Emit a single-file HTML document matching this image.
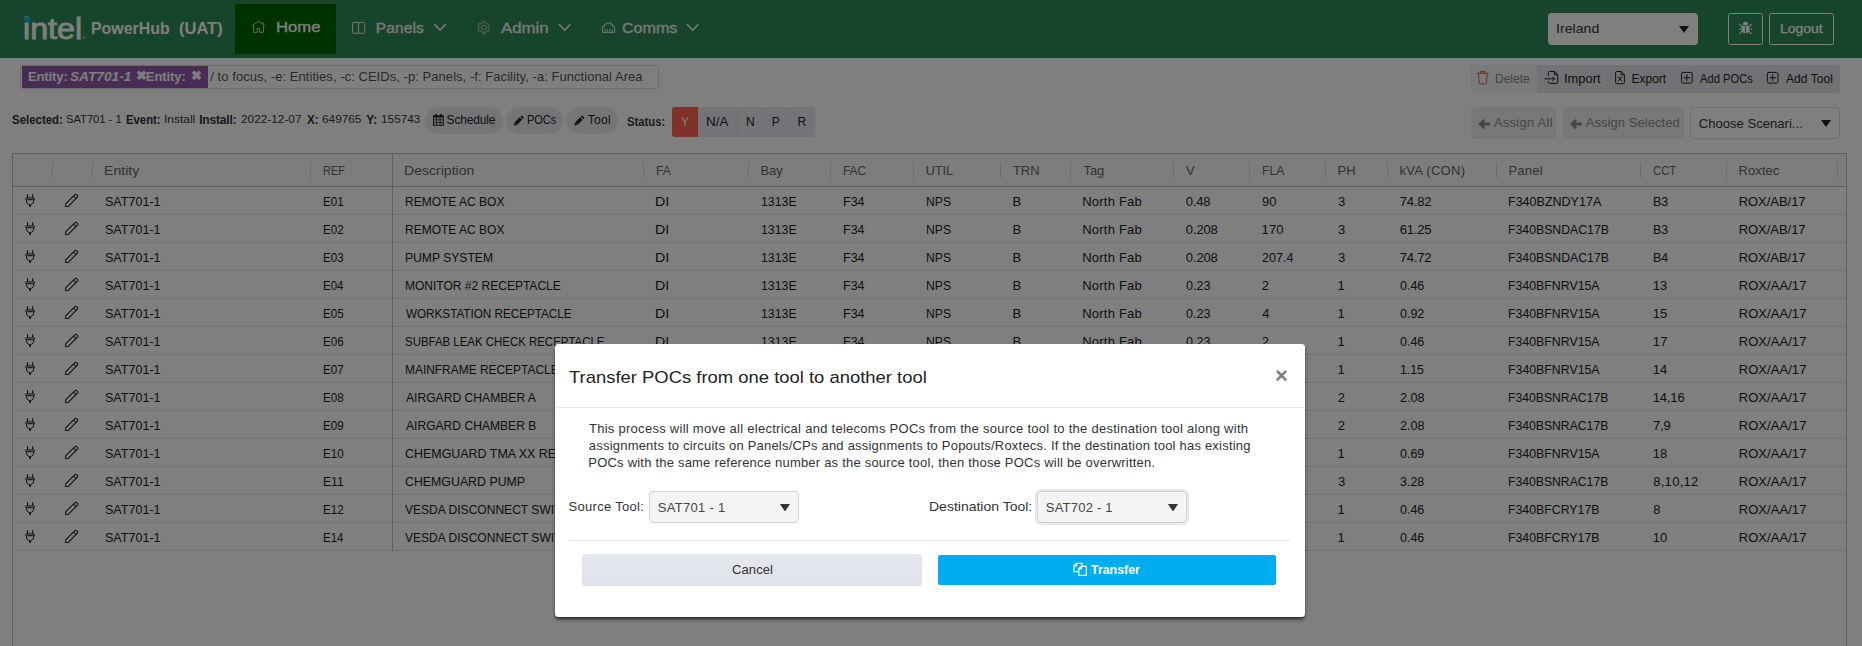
<!DOCTYPE html>
<html><head><meta charset="utf-8"><title>PowerHub (UAT)</title>
<style>
*{box-sizing:border-box;margin:0;padding:0}
html,body{width:1862px;height:646px;overflow:hidden;background:#fff;font-family:"Liberation Sans",sans-serif;color:#222}
.a,.t,svg{position:absolute}
.t{white-space:pre;line-height:1;transform-origin:0 0}
#page,#ov,#top{position:absolute;left:0;top:0;width:1862px;height:646px}
#ov{background:rgba(0,0,0,.5)}
</style></head><body>
<div id="page">
<div class="a" style="left:0px;top:0px;width:1862px;height:58px;background:#2e8b57"></div>
<div class="a" style="left:235px;top:4px;width:101px;height:50px;background:#006400"></div>
<div class="a" style="left:1548px;top:13px;width:150px;height:32px;background:#fff;border-radius:4px"></div>
<svg style="left:1679px;top:26px" width="10" height="7" viewBox="0 0 10 7"><path d="M0 0H10L5.0 7Z" fill="#222"/></svg>
<div class="a" style="left:1728px;top:13px;width:35px;height:32px;border:1px solid #fff;border-radius:2.5px"></div>
<div class="a" style="left:1769px;top:13px;width:65px;height:32px;border:1px solid #fff;border-radius:2.5px"></div>
<div class="a" style="left:20px;top:65px;width:639px;height:24px;background:#fff;border:1px solid #d8d8d8;border-radius:3px"></div>
<div class="a" style="left:22px;top:66px;width:186px;height:22px;background:#8f5aa8"></div>
<div class="a" style="left:1470px;top:65px;width:370px;height:28.3px;background:#e2e5ea;border-radius:3px"></div>
<div class="a" style="left:1470px;top:65px;width:67px;height:28px;background:#f3f4f6;border-radius:3px 0 0 3px"></div>
<div class="a" style="left:1607px;top:65px;width:1px;height:28px;background:#dfe2e7"></div>
<div class="a" style="left:1673px;top:65px;width:1px;height:28px;background:#dfe2e7"></div>
<div class="a" style="left:1760px;top:65px;width:1px;height:28px;background:#dfe2e7"></div>
<div class="a" style="left:425px;top:107px;width:78px;height:26.5px;background:#e8eaef;border-radius:13.5px"></div>
<div class="a" style="left:506px;top:107px;width:57px;height:26.5px;background:#e8eaef;border-radius:13.5px"></div>
<div class="a" style="left:567px;top:107px;width:51px;height:26.5px;background:#e8eaef;border-radius:13.5px"></div>
<div class="a" style="left:672px;top:107px;width:143px;height:29.5px;background:#e6e9ee;border-radius:3px"></div>
<div class="a" style="left:672px;top:107px;width:26px;height:29.5px;background:#ff6355;border-radius:3px 0 0 3px"></div>
<div class="a" style="left:737px;top:107px;width:1px;height:29.5px;background:#dfe2e7"></div>
<div class="a" style="left:765px;top:107px;width:1px;height:29.5px;background:#dfe2e7"></div>
<div class="a" style="left:789px;top:107px;width:1px;height:29.5px;background:#dfe2e7"></div>
<div class="a" style="left:1471px;top:107px;width:84.7px;height:31.8px;background:#eef0f3;border-radius:4px"></div>
<div class="a" style="left:1563px;top:107px;width:121px;height:31.8px;background:#eef0f3;border-radius:4px"></div>
<div class="a" style="left:1690px;top:107px;width:150px;height:31.5px;background:#fff;border:1px solid #ddd;border-radius:4px"></div>
<svg style="left:1821px;top:120px" width="10" height="7" viewBox="0 0 10 7"><path d="M0 0H10L5.0 7Z" fill="#222"/></svg>
<div class="a" style="left:12px;top:153px;width:1835px;height:520px;background:#fff;border:1px solid #babfc7"></div>
<div class="a" style="left:13px;top:154px;width:1833px;height:32px;background:#f6fdf9"></div>
<div class="a" style="left:13px;top:186px;width:1833px;height:1px;background:#babfc7"></div>
<div class="a" style="left:13px;top:214px;width:1833px;height:1px;background:#e1e4e9"></div>
<div class="a" style="left:13px;top:242px;width:1833px;height:1px;background:#e1e4e9"></div>
<div class="a" style="left:13px;top:270px;width:1833px;height:1px;background:#e1e4e9"></div>
<div class="a" style="left:13px;top:298px;width:1833px;height:1px;background:#e1e4e9"></div>
<div class="a" style="left:13px;top:326px;width:1833px;height:1px;background:#e1e4e9"></div>
<div class="a" style="left:13px;top:354px;width:1833px;height:1px;background:#e1e4e9"></div>
<div class="a" style="left:13px;top:382px;width:1833px;height:1px;background:#e1e4e9"></div>
<div class="a" style="left:13px;top:410px;width:1833px;height:1px;background:#e1e4e9"></div>
<div class="a" style="left:13px;top:438px;width:1833px;height:1px;background:#e1e4e9"></div>
<div class="a" style="left:13px;top:466px;width:1833px;height:1px;background:#e1e4e9"></div>
<div class="a" style="left:13px;top:494px;width:1833px;height:1px;background:#e1e4e9"></div>
<div class="a" style="left:13px;top:522px;width:1833px;height:1px;background:#e1e4e9"></div>
<div class="a" style="left:13px;top:550px;width:1833px;height:1px;background:#e1e4e9"></div>
<div class="a" style="left:392px;top:154px;width:1px;height:397px;background:#babfc7"></div>
<div class="a" style="left:52px;top:162px;width:1px;height:16px;background:#d4d8de"></div>
<div class="a" style="left:92px;top:162px;width:1px;height:16px;background:#d4d8de"></div>
<div class="a" style="left:310px;top:162px;width:1px;height:16px;background:#d4d8de"></div>
<div class="a" style="left:643px;top:162px;width:1px;height:16px;background:#d4d8de"></div>
<div class="a" style="left:748px;top:162px;width:1px;height:16px;background:#d4d8de"></div>
<div class="a" style="left:830px;top:162px;width:1px;height:16px;background:#d4d8de"></div>
<div class="a" style="left:913px;top:162px;width:1px;height:16px;background:#d4d8de"></div>
<div class="a" style="left:1000px;top:162px;width:1px;height:16px;background:#d4d8de"></div>
<div class="a" style="left:1070px;top:162px;width:1px;height:16px;background:#d4d8de"></div>
<div class="a" style="left:1173px;top:162px;width:1px;height:16px;background:#d4d8de"></div>
<div class="a" style="left:1249px;top:162px;width:1px;height:16px;background:#d4d8de"></div>
<div class="a" style="left:1325px;top:162px;width:1px;height:16px;background:#d4d8de"></div>
<div class="a" style="left:1387px;top:162px;width:1px;height:16px;background:#d4d8de"></div>
<div class="a" style="left:1496px;top:162px;width:1px;height:16px;background:#d4d8de"></div>
<div class="a" style="left:1640px;top:162px;width:1px;height:16px;background:#d4d8de"></div>
<div class="a" style="left:1726px;top:162px;width:1px;height:16px;background:#d4d8de"></div>
<div class="a" style="left:1837px;top:162px;width:1px;height:16px;background:#d4d8de"></div>
<svg style="left:22px;top:190px" width="60" height="20" viewBox="22 190 60 20" fill="none" stroke="#1a1a1a" stroke-width="1" stroke-linejoin="round"><path d="M27.500 194.200V197.700M32.700 194.200V197.700" stroke-width="1.100"/><rect x="25.600" y="197.900" width="9" height="1.800" rx=".9"/><path d="M26.500 199.900V201.500Q26.500 203.200 28.400 204.100L30.100 204.900L31.800 204.100Q33.700 203.200 33.700 201.500V199.900"/><path d="M30.100 205V206.900" stroke-width="1.600"/><g transform="translate(65.600 206.500) rotate(-45)"><path d="M0 0L1.900 -1.800H15a1.100 1.100 0 0 1 1.100 1.100V0.700a1.100 1.100 0 0 1 -1.100 1.100H1.900Z"/><path d="M12.900 -1.800V1.800"/></g></svg>
<svg style="left:22px;top:218px" width="60" height="20" viewBox="22 190 60 20" fill="none" stroke="#1a1a1a" stroke-width="1" stroke-linejoin="round"><path d="M27.500 194.200V197.700M32.700 194.200V197.700" stroke-width="1.100"/><rect x="25.600" y="197.900" width="9" height="1.800" rx=".9"/><path d="M26.500 199.900V201.500Q26.500 203.200 28.400 204.100L30.100 204.900L31.800 204.100Q33.700 203.200 33.700 201.500V199.900"/><path d="M30.100 205V206.900" stroke-width="1.600"/><g transform="translate(65.600 206.500) rotate(-45)"><path d="M0 0L1.900 -1.800H15a1.100 1.100 0 0 1 1.100 1.100V0.700a1.100 1.100 0 0 1 -1.100 1.100H1.900Z"/><path d="M12.900 -1.800V1.800"/></g></svg>
<svg style="left:22px;top:246px" width="60" height="20" viewBox="22 190 60 20" fill="none" stroke="#1a1a1a" stroke-width="1" stroke-linejoin="round"><path d="M27.500 194.200V197.700M32.700 194.200V197.700" stroke-width="1.100"/><rect x="25.600" y="197.900" width="9" height="1.800" rx=".9"/><path d="M26.500 199.900V201.500Q26.500 203.200 28.400 204.100L30.100 204.900L31.800 204.100Q33.700 203.200 33.700 201.500V199.900"/><path d="M30.100 205V206.900" stroke-width="1.600"/><g transform="translate(65.600 206.500) rotate(-45)"><path d="M0 0L1.900 -1.800H15a1.100 1.100 0 0 1 1.100 1.100V0.700a1.100 1.100 0 0 1 -1.100 1.100H1.900Z"/><path d="M12.900 -1.800V1.800"/></g></svg>
<svg style="left:22px;top:274px" width="60" height="20" viewBox="22 190 60 20" fill="none" stroke="#1a1a1a" stroke-width="1" stroke-linejoin="round"><path d="M27.500 194.200V197.700M32.700 194.200V197.700" stroke-width="1.100"/><rect x="25.600" y="197.900" width="9" height="1.800" rx=".9"/><path d="M26.500 199.900V201.500Q26.500 203.200 28.400 204.100L30.100 204.900L31.800 204.100Q33.700 203.200 33.700 201.500V199.900"/><path d="M30.100 205V206.900" stroke-width="1.600"/><g transform="translate(65.600 206.500) rotate(-45)"><path d="M0 0L1.900 -1.800H15a1.100 1.100 0 0 1 1.100 1.100V0.700a1.100 1.100 0 0 1 -1.100 1.100H1.900Z"/><path d="M12.900 -1.800V1.800"/></g></svg>
<svg style="left:22px;top:302px" width="60" height="20" viewBox="22 190 60 20" fill="none" stroke="#1a1a1a" stroke-width="1" stroke-linejoin="round"><path d="M27.500 194.200V197.700M32.700 194.200V197.700" stroke-width="1.100"/><rect x="25.600" y="197.900" width="9" height="1.800" rx=".9"/><path d="M26.500 199.900V201.500Q26.500 203.200 28.400 204.100L30.100 204.900L31.800 204.100Q33.700 203.200 33.700 201.500V199.900"/><path d="M30.100 205V206.900" stroke-width="1.600"/><g transform="translate(65.600 206.500) rotate(-45)"><path d="M0 0L1.900 -1.800H15a1.100 1.100 0 0 1 1.100 1.100V0.700a1.100 1.100 0 0 1 -1.100 1.100H1.900Z"/><path d="M12.900 -1.800V1.800"/></g></svg>
<svg style="left:22px;top:330px" width="60" height="20" viewBox="22 190 60 20" fill="none" stroke="#1a1a1a" stroke-width="1" stroke-linejoin="round"><path d="M27.500 194.200V197.700M32.700 194.200V197.700" stroke-width="1.100"/><rect x="25.600" y="197.900" width="9" height="1.800" rx=".9"/><path d="M26.500 199.900V201.500Q26.500 203.200 28.400 204.100L30.100 204.900L31.800 204.100Q33.700 203.200 33.700 201.500V199.900"/><path d="M30.100 205V206.900" stroke-width="1.600"/><g transform="translate(65.600 206.500) rotate(-45)"><path d="M0 0L1.900 -1.800H15a1.100 1.100 0 0 1 1.100 1.100V0.700a1.100 1.100 0 0 1 -1.100 1.100H1.900Z"/><path d="M12.900 -1.800V1.800"/></g></svg>
<svg style="left:22px;top:358px" width="60" height="20" viewBox="22 190 60 20" fill="none" stroke="#1a1a1a" stroke-width="1" stroke-linejoin="round"><path d="M27.500 194.200V197.700M32.700 194.200V197.700" stroke-width="1.100"/><rect x="25.600" y="197.900" width="9" height="1.800" rx=".9"/><path d="M26.500 199.900V201.500Q26.500 203.200 28.400 204.100L30.100 204.900L31.800 204.100Q33.700 203.200 33.700 201.500V199.900"/><path d="M30.100 205V206.900" stroke-width="1.600"/><g transform="translate(65.600 206.500) rotate(-45)"><path d="M0 0L1.900 -1.800H15a1.100 1.100 0 0 1 1.100 1.100V0.700a1.100 1.100 0 0 1 -1.100 1.100H1.900Z"/><path d="M12.900 -1.800V1.800"/></g></svg>
<svg style="left:22px;top:386px" width="60" height="20" viewBox="22 190 60 20" fill="none" stroke="#1a1a1a" stroke-width="1" stroke-linejoin="round"><path d="M27.500 194.200V197.700M32.700 194.200V197.700" stroke-width="1.100"/><rect x="25.600" y="197.900" width="9" height="1.800" rx=".9"/><path d="M26.500 199.900V201.500Q26.500 203.200 28.400 204.100L30.100 204.900L31.800 204.100Q33.700 203.200 33.700 201.500V199.900"/><path d="M30.100 205V206.900" stroke-width="1.600"/><g transform="translate(65.600 206.500) rotate(-45)"><path d="M0 0L1.900 -1.800H15a1.100 1.100 0 0 1 1.100 1.100V0.700a1.100 1.100 0 0 1 -1.100 1.100H1.900Z"/><path d="M12.900 -1.800V1.800"/></g></svg>
<svg style="left:22px;top:414px" width="60" height="20" viewBox="22 190 60 20" fill="none" stroke="#1a1a1a" stroke-width="1" stroke-linejoin="round"><path d="M27.500 194.200V197.700M32.700 194.200V197.700" stroke-width="1.100"/><rect x="25.600" y="197.900" width="9" height="1.800" rx=".9"/><path d="M26.500 199.900V201.500Q26.500 203.200 28.400 204.100L30.100 204.900L31.800 204.100Q33.700 203.200 33.700 201.500V199.900"/><path d="M30.100 205V206.900" stroke-width="1.600"/><g transform="translate(65.600 206.500) rotate(-45)"><path d="M0 0L1.900 -1.800H15a1.100 1.100 0 0 1 1.100 1.100V0.700a1.100 1.100 0 0 1 -1.100 1.100H1.900Z"/><path d="M12.900 -1.800V1.800"/></g></svg>
<svg style="left:22px;top:442px" width="60" height="20" viewBox="22 190 60 20" fill="none" stroke="#1a1a1a" stroke-width="1" stroke-linejoin="round"><path d="M27.500 194.200V197.700M32.700 194.200V197.700" stroke-width="1.100"/><rect x="25.600" y="197.900" width="9" height="1.800" rx=".9"/><path d="M26.500 199.900V201.500Q26.500 203.200 28.400 204.100L30.100 204.900L31.800 204.100Q33.700 203.200 33.700 201.500V199.900"/><path d="M30.100 205V206.900" stroke-width="1.600"/><g transform="translate(65.600 206.500) rotate(-45)"><path d="M0 0L1.900 -1.800H15a1.100 1.100 0 0 1 1.100 1.100V0.700a1.100 1.100 0 0 1 -1.100 1.100H1.900Z"/><path d="M12.900 -1.800V1.800"/></g></svg>
<svg style="left:22px;top:470px" width="60" height="20" viewBox="22 190 60 20" fill="none" stroke="#1a1a1a" stroke-width="1" stroke-linejoin="round"><path d="M27.500 194.200V197.700M32.700 194.200V197.700" stroke-width="1.100"/><rect x="25.600" y="197.900" width="9" height="1.800" rx=".9"/><path d="M26.500 199.900V201.500Q26.500 203.200 28.400 204.100L30.100 204.900L31.800 204.100Q33.700 203.200 33.700 201.500V199.900"/><path d="M30.100 205V206.900" stroke-width="1.600"/><g transform="translate(65.600 206.500) rotate(-45)"><path d="M0 0L1.900 -1.800H15a1.100 1.100 0 0 1 1.100 1.100V0.700a1.100 1.100 0 0 1 -1.100 1.100H1.900Z"/><path d="M12.900 -1.800V1.800"/></g></svg>
<svg style="left:22px;top:498px" width="60" height="20" viewBox="22 190 60 20" fill="none" stroke="#1a1a1a" stroke-width="1" stroke-linejoin="round"><path d="M27.500 194.200V197.700M32.700 194.200V197.700" stroke-width="1.100"/><rect x="25.600" y="197.900" width="9" height="1.800" rx=".9"/><path d="M26.500 199.900V201.500Q26.500 203.200 28.400 204.100L30.100 204.900L31.800 204.100Q33.700 203.200 33.700 201.500V199.900"/><path d="M30.100 205V206.900" stroke-width="1.600"/><g transform="translate(65.600 206.500) rotate(-45)"><path d="M0 0L1.900 -1.800H15a1.100 1.100 0 0 1 1.100 1.100V0.700a1.100 1.100 0 0 1 -1.100 1.100H1.900Z"/><path d="M12.900 -1.800V1.800"/></g></svg>
<svg style="left:22px;top:526px" width="60" height="20" viewBox="22 190 60 20" fill="none" stroke="#1a1a1a" stroke-width="1" stroke-linejoin="round"><path d="M27.500 194.200V197.700M32.700 194.200V197.700" stroke-width="1.100"/><rect x="25.600" y="197.900" width="9" height="1.800" rx=".9"/><path d="M26.500 199.900V201.500Q26.500 203.200 28.400 204.100L30.100 204.900L31.800 204.100Q33.700 203.200 33.700 201.500V199.900"/><path d="M30.100 205V206.900" stroke-width="1.600"/><g transform="translate(65.600 206.500) rotate(-45)"><path d="M0 0L1.900 -1.800H15a1.100 1.100 0 0 1 1.100 1.100V0.700a1.100 1.100 0 0 1 -1.100 1.100H1.900Z"/><path d="M12.900 -1.800V1.800"/></g></svg>
<svg style="left:0;top:0" width="1862" height="646" viewBox="0 0 1862 646" fill="none"><g stroke="#c8d0c8" stroke-width="1" stroke-linecap="round" stroke-linejoin="round"><path d="M252.3 25.9L258.5 21.2L264.7 25.9"/><path d="M253.6 26.2V32.3H257.3V28.4H259.7V32.3H263.4V26.2"/><path d="M263.1 22.4V24.3"/></g><g stroke="#e8e8e8" stroke-width="1"><rect x="352.5" y="22.4" width="12.2" height="10.9" rx="1.5"/><path d="M358.6 22.4V33.3"/></g><g stroke="#c4ccc6" stroke-width="1" stroke-linejoin="round"><path d="M482.21 23.01L482.55 21.39L484.65 21.39L484.99 23.01L486.79 24.05L488.37 23.54L489.42 25.35L488.18 26.46L488.18 28.54L489.42 29.65L488.37 31.46L486.79 30.95L484.99 31.99L484.65 33.61L482.55 33.61L482.21 31.99L480.41 30.95L478.83 31.46L477.78 29.65L479.02 28.54L479.02 26.46L477.78 25.35L478.83 23.54L480.41 24.05Z"/><circle cx="483.6" cy="27.5" r="2.3"/></g><g stroke="#e8e8e8" stroke-width="1" stroke-linejoin="round"><path d="M602.5 32.4V26.6H604.3V24.8H605.8V23.2H611.3V24.8H612.8V26.6H614.6V32.4Z"/><path d="M604.9 28.8V32.4M607.3 28.8V32.4M609.8 28.8V32.4M612.2 28.8V32.4" stroke-width=".9"/></g><path d="M434.8 24.6L440.1 30.1L445.40000000000003 24.6" stroke="#e8e8e8" stroke-width="1.7" stroke-linecap="round" stroke-linejoin="round"/><path d="M559.4000000000001 24.6L564.7 30.1L570.0 24.6" stroke="#e8e8e8" stroke-width="1.7" stroke-linecap="round" stroke-linejoin="round"/><path d="M687.4000000000001 24.6L692.7 30.1L698.0 24.6" stroke="#e8e8e8" stroke-width="1.7" stroke-linecap="round" stroke-linejoin="round"/><g fill="#fff" stroke="#fff"><path d="M1742.800 25.200a2.700 3.400 0 0 1 5.400 0z" stroke="none"/><path d="M1741.900 25.900H1749.100V30.100a3.600 3.200 0 0 1-7.200 0z" stroke="none"/><path d="M1742 26.8L1739.8 24.4M1749 26.8L1751.2 24.4M1742 29H1739.3M1749 29H1751.7M1742 31.2L1739.8 33.6M1749 31.2L1751.2 33.6" stroke-width="1.200" stroke-linecap="round"/><path d="M1745.500 27V32.800" stroke="#2e8b57" stroke-width=".9"/></g><g stroke="#e8504a" stroke-width="1" stroke-linejoin="round" stroke-linecap="round"><path d="M1477.3 73.2H1488.3"/><path d="M1480.8 73V71.5H1484.8V73"/><path d="M1478.3 73.4L1479.3 83.1Q1479.4 83.9 1480.2 83.9H1485.4Q1486.2 83.900 1486.300 83.100L1487.300 73.400"/></g><g stroke="#222" stroke-width="1" stroke-linejoin="round" stroke-linecap="round"><path d="M1548.4 75.5V72.5Q1548.400 71.500 1549.400 71.500H1554.500L1557.700 74.700V82.400Q1557.700 83.400 1556.700 83.400H1549.400Q1548.400 83.400 1548.400 82.400V81.500"/><path d="M1554.500 71.500V74.700H1557.700"/><path d="M1545 78.800H1554.500M1552.700 77L1554.500 78.800L1552.700 80.600"/></g><g stroke="#222" stroke-width="1" stroke-linejoin="round" stroke-linecap="round"><path d="M1615.600 72.500Q1615.600 71.500 1616.600 71.500H1621.200L1624.400 74.700V82.700Q1624.400 83.700 1623.400 83.700H1616.600Q1615.600 83.700 1615.600 82.700Z"/><path d="M1621.200 71.500V74.700H1624.400"/><path d="M1618.200 76.700L1621.800 81M1621.800 76.700L1618.200 81"/></g><g stroke="#222" stroke-width="1" stroke-linecap="round"><rect x="1681.5" y="72.400" width="10.700" height="10.700" rx="1.600"/><path d="M1683.9 77.750H1689.8M1686.85 74.800V80.700"/></g><g stroke="#222" stroke-width="1" stroke-linecap="round"><rect x="1767.3" y="72.400" width="10.700" height="10.700" rx="1.600"/><path d="M1769.7 77.750H1775.6M1772.6499999999999 74.800V80.700"/></g><g fill="#222"><path fill-rule="evenodd" d="M433 115.300H443.800V125.800H433ZM434 117.500V119.400H436.200V117.500ZM437.100 117.500V119.400H439.600V117.500ZM440.500 117.500V119.400H442.800V117.500ZM434 120.300V122.200H436.200V120.300ZM437.100 120.300V122.200H439.600V120.300ZM440.500 120.300V122.200H442.800V120.300ZM434 123.100V124.800H436.200V123.100ZM437.100 123.100V124.800H439.600V123.100ZM440.500 123.100V124.800H442.800V123.100Z"/><rect x="435.200" y="113.700" width="1.600" height="2.900" rx=".8"/><rect x="440" y="113.700" width="1.600" height="2.900" rx=".8"/></g><g transform="translate(513.5 114.6) scale(1.06)" fill="#222"><path d="M7.700 0.800L9.900 3L8.700 4.200L6.500 2ZM5.900 2.600L8.100 4.800L3.200 9.700L0.300 10.400L1 7.500Z"/><path d="M1.600 7.900L2.800 9.100" stroke="#e8eaef" stroke-width=".7"/></g><g transform="translate(574 114.6) scale(1.06)" fill="#222"><path d="M7.700 0.800L9.900 3L8.700 4.200L6.500 2ZM5.900 2.600L8.100 4.800L3.200 9.700L0.300 10.400L1 7.500Z"/><path d="M1.600 7.900L2.800 9.100" stroke="#e8eaef" stroke-width=".7"/></g><path transform="translate(1478.3 119.3)" fill="#8a8a8a" d="M0 4.800L5.200 -.3L7 1.500L5.200 3.300H11.800V6.300H5.200L7 8.100L5.200 9.900Z"/><path transform="translate(1570 119.3)" fill="#8a8a8a" d="M0 4.800L5.200 -.3L7 1.500L5.200 3.300H11.800V6.300H5.200L7 8.100L5.200 9.900Z"/></svg>
<div class="t" style="left:23.3px;top:13.8px;font-size:30px;color:#fff;transform:scaleX(1.075);-webkit-text-stroke:0.8px #fff">intel</div>
<div class="t" style="left:82.4px;top:35.9px;font-size:4px;color:#fff">®</div>
<div class="t" style="left:90.6px;top:20.2px;font-size:17px;color:#fff;font-weight:bold;transform:scaleX(0.937)">PowerHub</div>
<div class="t" style="left:179.1px;top:20.2px;font-size:17px;color:#fff;font-weight:bold;transform:scaleX(0.970)">(UAT)</div>
<div class="t" style="left:276.2px;top:18.6px;font-size:15.5px;color:#fff;transform:scaleX(1.076);-webkit-text-stroke:0.3px #fff">Home</div>
<div class="t" style="left:375.8px;top:19.6px;font-size:15.5px;color:#f2f2f2;letter-spacing:0.12px;-webkit-text-stroke:0.3px #f2f2f2">Panels</div>
<div class="t" style="left:501.3px;top:19.6px;font-size:15.5px;color:#f2f2f2;transform:scaleX(1.086);-webkit-text-stroke:0.3px #f2f2f2">Admin</div>
<div class="t" style="left:621.6px;top:19.6px;font-size:15.5px;color:#f2f2f2;transform:scaleX(1.037);-webkit-text-stroke:0.3px #f2f2f2">Comms</div>
<div class="t" style="left:1556.2px;top:22.3px;font-size:13px;color:#333;transform:scaleX(1.089)">Ireland</div>
<div class="t" style="left:1779.8px;top:22.3px;font-size:13px;color:#fff;transform:scaleX(1.075);-webkit-text-stroke:0.25px #fff">Logout</div>
<div class="t" style="left:27.9px;top:69.7px;font-size:13px;color:#fff;letter-spacing:-0.10px;font-weight:bold">Entity:</div>
<div class="t" style="left:70.0px;top:69.7px;font-size:13px;color:#fff;font-weight:bold;font-style:italic;transform:scaleX(1.052)">SAT701-1</div>
<div class="t" style="left:135.8px;top:69.2px;font-size:13px;color:#fff;font-weight:bold">✖</div>
<div class="t" style="left:145.8px;top:69.7px;font-size:13px;color:#fff;letter-spacing:-0.07px;font-weight:bold">Entity:</div>
<div class="t" style="left:190.7px;top:69.2px;font-size:13px;color:#fff;font-weight:bold">✖</div>
<div class="t" style="left:210.3px;top:70.3px;font-size:13px;color:#555;letter-spacing:0.05px">/ to focus, -e: Entities, -c: CEIDs, -p: Panels, -f: Facility, -a: Functional Area</div>
<div class="t" style="left:1495.1px;top:73.3px;font-size:12px;color:#858585;letter-spacing:-0.03px">Delete</div>
<div class="t" style="left:1564.2px;top:73.3px;font-size:12px;color:#222;transform:scaleX(1.073)">Import</div>
<div class="t" style="left:1631.5px;top:73.3px;font-size:12px;color:#222;letter-spacing:-0.01px">Export</div>
<div class="t" style="left:1700.2px;top:73.3px;font-size:12px;color:#222;transform:scaleX(0.932)">Add POCs</div>
<div class="t" style="left:1785.9px;top:73.3px;font-size:12px;color:#222;letter-spacing:0.09px">Add Tool</div>
<div class="t" style="left:11.6px;top:113.9px;font-size:12px;color:#333;font-weight:bold;transform:scaleX(0.953)">Selected:</div>
<div class="t" style="left:66.1px;top:114.7px;font-size:10px;color:#333;transform:scaleX(1.116)">SAT701 - 1</div>
<div class="t" style="left:126.3px;top:113.9px;font-size:12px;color:#333;font-weight:bold;transform:scaleX(0.944)">Event:</div>
<div class="t" style="left:164.2px;top:114.7px;font-size:10px;color:#333;transform:scaleX(1.196)">Install</div>
<div class="t" style="left:199.2px;top:113.9px;font-size:12px;color:#333;letter-spacing:-0.18px;font-weight:bold">Install:</div>
<div class="t" style="left:240.7px;top:114.7px;font-size:10px;color:#333;transform:scaleX(1.182)">2022-12-07</div>
<div class="t" style="left:306.5px;top:113.9px;font-size:12px;color:#333;font-weight:bold;transform:scaleX(0.962)">X:</div>
<div class="t" style="left:321.6px;top:114.7px;font-size:10px;color:#333;transform:scaleX(1.182)">649765</div>
<div class="t" style="left:366.2px;top:113.9px;font-size:12px;color:#333;letter-spacing:-0.05px;font-weight:bold">Y:</div>
<div class="t" style="left:381.0px;top:114.7px;font-size:10px;color:#333;transform:scaleX(1.181)">155743</div>
<div class="t" style="left:446.6px;top:113.9px;font-size:12px;color:#222;letter-spacing:-0.16px">Schedule</div>
<div class="t" style="left:526.9px;top:113.9px;font-size:12px;color:#222;transform:scaleX(0.911)">POCs</div>
<div class="t" style="left:587.8px;top:113.9px;font-size:12px;color:#222;letter-spacing:0.27px">Tool</div>
<div class="t" style="left:627.0px;top:115.8px;font-size:12.5px;color:#3a3a3a;font-weight:bold;transform:scaleX(0.901)">Status:</div>
<div class="t" style="left:681.0px;top:115.9px;font-size:12px;color:#fff;letter-spacing:-0.62px">Y</div>
<div class="t" style="left:706.1px;top:115.9px;font-size:12px;color:#222;transform:scaleX(1.121)">N/A</div>
<div class="t" style="left:746.1px;top:115.9px;font-size:12px;color:#222;letter-spacing:-0.62px">N</div>
<div class="t" style="left:771.8px;top:115.9px;font-size:12px;color:#222;letter-spacing:-0.62px">P</div>
<div class="t" style="left:797.5px;top:115.9px;font-size:12px;color:#222;letter-spacing:-0.62px">R</div>
<div class="t" style="left:1493.9px;top:116.2px;font-size:13px;color:#8a8a8a;letter-spacing:0.26px">Assign All</div>
<div class="t" style="left:1585.7px;top:116.2px;font-size:13px;color:#8a8a8a;letter-spacing:0.06px">Assign Selected</div>
<div class="t" style="left:1698.8px;top:117.0px;font-size:13px;color:#333;letter-spacing:0.04px">Choose Scenari...</div>
<div class="t" style="left:104.2px;top:164.1px;font-size:13px;color:#60656b;transform:scaleX(1.083)">Entity</div>
<div class="t" style="left:323.2px;top:164.1px;font-size:13px;color:#60656b;transform:scaleX(0.845)">REF</div>
<div class="t" style="left:404.2px;top:164.1px;font-size:13px;color:#60656b;transform:scaleX(1.081)">Description</div>
<div class="t" style="left:655.6px;top:164.1px;font-size:13px;color:#60656b;transform:scaleX(0.942)">FA</div>
<div class="t" style="left:760.5px;top:164.1px;font-size:13px;color:#60656b;letter-spacing:-0.12px">Bay</div>
<div class="t" style="left:842.6px;top:164.1px;font-size:13px;color:#60656b;transform:scaleX(0.914)">FAC</div>
<div class="t" style="left:925.5px;top:164.1px;font-size:13px;color:#60656b;letter-spacing:-0.18px">UTIL</div>
<div class="t" style="left:1013.0px;top:164.1px;font-size:13px;color:#60656b;letter-spacing:-0.10px">TRN</div>
<div class="t" style="left:1083.5px;top:164.1px;font-size:13px;color:#60656b;letter-spacing:-0.10px">Tag</div>
<div class="t" style="left:1186.0px;top:164.1px;font-size:13px;color:#60656b;letter-spacing:-0.62px">V</div>
<div class="t" style="left:1261.7px;top:164.1px;font-size:13px;color:#60656b;transform:scaleX(0.945)">FLA</div>
<div class="t" style="left:1337.6px;top:164.1px;font-size:13px;color:#60656b;letter-spacing:0.10px">PH</div>
<div class="t" style="left:1399.5px;top:164.1px;font-size:13px;color:#60656b;letter-spacing:0.27px">kVA (CON)</div>
<div class="t" style="left:1508.4px;top:164.1px;font-size:13px;color:#60656b;letter-spacing:0.22px">Panel</div>
<div class="t" style="left:1653.0px;top:164.1px;font-size:13px;color:#60656b;transform:scaleX(0.866)">CCT</div>
<div class="t" style="left:1738.6px;top:164.1px;font-size:13px;color:#60656b;letter-spacing:0.06px">Roxtec</div>
<div class="t" style="left:104.6px;top:195.2px;font-size:13px;color:#1c2124;transform:scaleX(0.965)">SAT701-1</div>
<div class="t" style="left:323.1px;top:195.2px;font-size:13px;color:#1c2124;transform:scaleX(0.893)">E01</div>
<div class="t" style="left:404.6px;top:195.2px;font-size:13px;color:#1c2124;transform:scaleX(0.924)">REMOTE AC BOX</div>
<div class="t" style="left:655.4px;top:195.2px;font-size:13px;color:#1c2124;transform:scaleX(1.098)">DI</div>
<div class="t" style="left:761.1px;top:195.2px;font-size:13px;color:#1c2124;transform:scaleX(0.950)">1313E</div>
<div class="t" style="left:842.5px;top:195.2px;font-size:13px;color:#1c2124;transform:scaleX(0.962)">F34</div>
<div class="t" style="left:925.6px;top:195.2px;font-size:13px;color:#1c2124;transform:scaleX(0.935)">NPS</div>
<div class="t" style="left:1012.5px;top:195.2px;font-size:13px;color:#1c2124;letter-spacing:-0.62px">B</div>
<div class="t" style="left:1082.2px;top:195.2px;font-size:13px;color:#1c2124;letter-spacing:0.22px">North Fab</div>
<div class="t" style="left:1185.8px;top:195.2px;font-size:13px;color:#1c2124;letter-spacing:-0.18px">0.48</div>
<div class="t" style="left:1262.1px;top:195.2px;font-size:13px;color:#1c2124">90</div>
<div class="t" style="left:1338.1px;top:195.2px;font-size:13px;color:#1c2124;letter-spacing:-0.25px">3</div>
<div class="t" style="left:1399.8px;top:195.2px;font-size:13px;color:#1c2124;letter-spacing:-0.19px">74.82</div>
<div class="t" style="left:1508.3px;top:195.2px;font-size:13px;color:#1c2124;transform:scaleX(0.963)">F340BZNDY17A</div>
<div class="t" style="left:1652.7px;top:195.2px;font-size:13px;color:#1c2124;transform:scaleX(0.961)">B3</div>
<div class="t" style="left:1738.7px;top:195.2px;font-size:13px;color:#1c2124;letter-spacing:-0.04px">ROX/AB/17</div>
<div class="t" style="left:104.6px;top:223.2px;font-size:13px;color:#1c2124;transform:scaleX(0.965)">SAT701-1</div>
<div class="t" style="left:323.1px;top:223.2px;font-size:13px;color:#1c2124;transform:scaleX(0.893)">E02</div>
<div class="t" style="left:404.6px;top:223.2px;font-size:13px;color:#1c2124;transform:scaleX(0.924)">REMOTE AC BOX</div>
<div class="t" style="left:655.4px;top:223.2px;font-size:13px;color:#1c2124;transform:scaleX(1.098)">DI</div>
<div class="t" style="left:761.1px;top:223.2px;font-size:13px;color:#1c2124;transform:scaleX(0.950)">1313E</div>
<div class="t" style="left:842.5px;top:223.2px;font-size:13px;color:#1c2124;transform:scaleX(0.962)">F34</div>
<div class="t" style="left:925.6px;top:223.2px;font-size:13px;color:#1c2124;transform:scaleX(0.935)">NPS</div>
<div class="t" style="left:1012.5px;top:223.2px;font-size:13px;color:#1c2124;letter-spacing:-0.62px">B</div>
<div class="t" style="left:1082.2px;top:223.2px;font-size:13px;color:#1c2124;letter-spacing:0.22px">North Fab</div>
<div class="t" style="left:1185.8px;top:223.2px;font-size:13px;color:#1c2124;letter-spacing:-0.12px">0.208</div>
<div class="t" style="left:1261.6px;top:223.2px;font-size:13px;color:#1c2124;letter-spacing:0.07px">170</div>
<div class="t" style="left:1338.1px;top:223.2px;font-size:13px;color:#1c2124;letter-spacing:-0.25px">3</div>
<div class="t" style="left:1399.8px;top:223.2px;font-size:13px;color:#1c2124;letter-spacing:-0.19px">61.25</div>
<div class="t" style="left:1508.4px;top:223.2px;font-size:13px;color:#1c2124;transform:scaleX(0.944)">F340BSNDAC17B</div>
<div class="t" style="left:1652.7px;top:223.2px;font-size:13px;color:#1c2124;transform:scaleX(0.961)">B3</div>
<div class="t" style="left:1738.7px;top:223.2px;font-size:13px;color:#1c2124;letter-spacing:-0.04px">ROX/AB/17</div>
<div class="t" style="left:104.6px;top:251.2px;font-size:13px;color:#1c2124;transform:scaleX(0.965)">SAT701-1</div>
<div class="t" style="left:323.1px;top:251.2px;font-size:13px;color:#1c2124;transform:scaleX(0.893)">E03</div>
<div class="t" style="left:404.6px;top:251.2px;font-size:13px;color:#1c2124;transform:scaleX(0.932)">PUMP SYSTEM</div>
<div class="t" style="left:655.4px;top:251.2px;font-size:13px;color:#1c2124;transform:scaleX(1.098)">DI</div>
<div class="t" style="left:761.1px;top:251.2px;font-size:13px;color:#1c2124;transform:scaleX(0.950)">1313E</div>
<div class="t" style="left:842.5px;top:251.2px;font-size:13px;color:#1c2124;transform:scaleX(0.962)">F34</div>
<div class="t" style="left:925.6px;top:251.2px;font-size:13px;color:#1c2124;transform:scaleX(0.935)">NPS</div>
<div class="t" style="left:1012.5px;top:251.2px;font-size:13px;color:#1c2124;letter-spacing:-0.62px">B</div>
<div class="t" style="left:1082.2px;top:251.2px;font-size:13px;color:#1c2124;letter-spacing:0.22px">North Fab</div>
<div class="t" style="left:1185.8px;top:251.2px;font-size:13px;color:#1c2124;letter-spacing:-0.12px">0.208</div>
<div class="t" style="left:1261.9px;top:251.2px;font-size:13px;color:#1c2124;transform:scaleX(0.968)">207.4</div>
<div class="t" style="left:1338.1px;top:251.2px;font-size:13px;color:#1c2124;letter-spacing:-0.25px">3</div>
<div class="t" style="left:1399.8px;top:251.2px;font-size:13px;color:#1c2124;letter-spacing:-0.19px">74.72</div>
<div class="t" style="left:1508.4px;top:251.2px;font-size:13px;color:#1c2124;transform:scaleX(0.944)">F340BSNDAC17B</div>
<div class="t" style="left:1652.7px;top:251.2px;font-size:13px;color:#1c2124;transform:scaleX(0.959)">B4</div>
<div class="t" style="left:1738.7px;top:251.2px;font-size:13px;color:#1c2124;letter-spacing:-0.04px">ROX/AB/17</div>
<div class="t" style="left:104.6px;top:279.2px;font-size:13px;color:#1c2124;transform:scaleX(0.965)">SAT701-1</div>
<div class="t" style="left:323.1px;top:279.2px;font-size:13px;color:#1c2124;transform:scaleX(0.883)">E04</div>
<div class="t" style="left:404.6px;top:279.2px;font-size:13px;color:#1c2124;transform:scaleX(0.924)">MONITOR #2 RECEPTACLE</div>
<div class="t" style="left:655.4px;top:279.2px;font-size:13px;color:#1c2124;transform:scaleX(1.098)">DI</div>
<div class="t" style="left:761.1px;top:279.2px;font-size:13px;color:#1c2124;transform:scaleX(0.950)">1313E</div>
<div class="t" style="left:842.5px;top:279.2px;font-size:13px;color:#1c2124;transform:scaleX(0.962)">F34</div>
<div class="t" style="left:925.6px;top:279.2px;font-size:13px;color:#1c2124;transform:scaleX(0.935)">NPS</div>
<div class="t" style="left:1012.5px;top:279.2px;font-size:13px;color:#1c2124;letter-spacing:-0.62px">B</div>
<div class="t" style="left:1082.2px;top:279.2px;font-size:13px;color:#1c2124;letter-spacing:0.22px">North Fab</div>
<div class="t" style="left:1185.8px;top:279.2px;font-size:13px;color:#1c2124;transform:scaleX(0.969)">0.23</div>
<div class="t" style="left:1261.8px;top:279.2px;font-size:13px;color:#1c2124;letter-spacing:-0.25px">2</div>
<div class="t" style="left:1337.6px;top:279.2px;font-size:13px;color:#1c2124;letter-spacing:-0.25px">1</div>
<div class="t" style="left:1400.0px;top:279.2px;font-size:13px;color:#1c2124;transform:scaleX(0.961)">0.46</div>
<div class="t" style="left:1508.4px;top:279.2px;font-size:13px;color:#1c2124;transform:scaleX(0.948)">F340BFNRV15A</div>
<div class="t" style="left:1652.7px;top:279.2px;font-size:13px;color:#1c2124">13</div>
<div class="t" style="left:1738.7px;top:279.2px;font-size:13px;color:#1c2124;letter-spacing:0.06px">ROX/AA/17</div>
<div class="t" style="left:104.6px;top:307.2px;font-size:13px;color:#1c2124;transform:scaleX(0.965)">SAT701-1</div>
<div class="t" style="left:323.1px;top:307.2px;font-size:13px;color:#1c2124;transform:scaleX(0.893)">E05</div>
<div class="t" style="left:405.5px;top:307.2px;font-size:13px;color:#1c2124;transform:scaleX(0.899)">WORKSTATION RECEPTACLE</div>
<div class="t" style="left:655.4px;top:307.2px;font-size:13px;color:#1c2124;transform:scaleX(1.098)">DI</div>
<div class="t" style="left:761.1px;top:307.2px;font-size:13px;color:#1c2124;transform:scaleX(0.950)">1313E</div>
<div class="t" style="left:842.5px;top:307.2px;font-size:13px;color:#1c2124;transform:scaleX(0.962)">F34</div>
<div class="t" style="left:925.6px;top:307.2px;font-size:13px;color:#1c2124;transform:scaleX(0.935)">NPS</div>
<div class="t" style="left:1012.5px;top:307.2px;font-size:13px;color:#1c2124;letter-spacing:-0.62px">B</div>
<div class="t" style="left:1082.2px;top:307.2px;font-size:13px;color:#1c2124;letter-spacing:0.22px">North Fab</div>
<div class="t" style="left:1185.8px;top:307.2px;font-size:13px;color:#1c2124;transform:scaleX(0.969)">0.23</div>
<div class="t" style="left:1262.3px;top:307.2px;font-size:13px;color:#1c2124;letter-spacing:-0.25px">4</div>
<div class="t" style="left:1337.6px;top:307.2px;font-size:13px;color:#1c2124;letter-spacing:-0.25px">1</div>
<div class="t" style="left:1400.0px;top:307.2px;font-size:13px;color:#1c2124;transform:scaleX(0.961)">0.92</div>
<div class="t" style="left:1508.4px;top:307.2px;font-size:13px;color:#1c2124;transform:scaleX(0.948)">F340BFNRV15A</div>
<div class="t" style="left:1652.7px;top:307.2px;font-size:13px;color:#1c2124">15</div>
<div class="t" style="left:1738.7px;top:307.2px;font-size:13px;color:#1c2124;letter-spacing:0.06px">ROX/AA/17</div>
<div class="t" style="left:104.6px;top:335.2px;font-size:13px;color:#1c2124;transform:scaleX(0.965)">SAT701-1</div>
<div class="t" style="left:323.1px;top:335.2px;font-size:13px;color:#1c2124;transform:scaleX(0.893)">E06</div>
<div class="t" style="left:404.8px;top:335.2px;font-size:13px;color:#1c2124;transform:scaleX(0.880)">SUBFAB LEAK CHECK RECEPTACLE</div>
<div class="t" style="left:655.4px;top:335.2px;font-size:13px;color:#1c2124;transform:scaleX(1.098)">DI</div>
<div class="t" style="left:761.1px;top:335.2px;font-size:13px;color:#1c2124;transform:scaleX(0.950)">1313E</div>
<div class="t" style="left:842.5px;top:335.2px;font-size:13px;color:#1c2124;transform:scaleX(0.962)">F34</div>
<div class="t" style="left:925.6px;top:335.2px;font-size:13px;color:#1c2124;transform:scaleX(0.935)">NPS</div>
<div class="t" style="left:1012.5px;top:335.2px;font-size:13px;color:#1c2124;letter-spacing:-0.62px">B</div>
<div class="t" style="left:1082.2px;top:335.2px;font-size:13px;color:#1c2124;letter-spacing:0.22px">North Fab</div>
<div class="t" style="left:1185.8px;top:335.2px;font-size:13px;color:#1c2124;transform:scaleX(0.969)">0.23</div>
<div class="t" style="left:1261.8px;top:335.2px;font-size:13px;color:#1c2124;letter-spacing:-0.25px">2</div>
<div class="t" style="left:1337.6px;top:335.2px;font-size:13px;color:#1c2124;letter-spacing:-0.25px">1</div>
<div class="t" style="left:1400.0px;top:335.2px;font-size:13px;color:#1c2124;transform:scaleX(0.961)">0.46</div>
<div class="t" style="left:1508.4px;top:335.2px;font-size:13px;color:#1c2124;transform:scaleX(0.948)">F340BFNRV15A</div>
<div class="t" style="left:1652.7px;top:335.2px;font-size:13px;color:#1c2124;letter-spacing:0.25px">17</div>
<div class="t" style="left:1738.7px;top:335.2px;font-size:13px;color:#1c2124;letter-spacing:0.06px">ROX/AA/17</div>
<div class="t" style="left:104.6px;top:363.2px;font-size:13px;color:#1c2124;transform:scaleX(0.965)">SAT701-1</div>
<div class="t" style="left:323.1px;top:363.2px;font-size:13px;color:#1c2124;transform:scaleX(0.893)">E07</div>
<div class="t" style="left:404.6px;top:363.2px;font-size:13px;color:#1c2124;transform:scaleX(0.918)">MAINFRAME RECEPTACLE</div>
<div class="t" style="left:655.4px;top:363.2px;font-size:13px;color:#1c2124;transform:scaleX(1.098)">DI</div>
<div class="t" style="left:761.1px;top:363.2px;font-size:13px;color:#1c2124;transform:scaleX(0.950)">1313E</div>
<div class="t" style="left:842.5px;top:363.2px;font-size:13px;color:#1c2124;transform:scaleX(0.962)">F34</div>
<div class="t" style="left:925.6px;top:363.2px;font-size:13px;color:#1c2124;transform:scaleX(0.935)">NPS</div>
<div class="t" style="left:1012.5px;top:363.2px;font-size:13px;color:#1c2124;letter-spacing:-0.62px">B</div>
<div class="t" style="left:1082.2px;top:363.2px;font-size:13px;color:#1c2124;letter-spacing:0.22px">North Fab</div>
<div class="t" style="left:1185.8px;top:363.2px;font-size:13px;color:#1c2124;transform:scaleX(0.969)">0.23</div>
<div class="t" style="left:1262.1px;top:363.2px;font-size:13px;color:#1c2124;letter-spacing:-0.25px">5</div>
<div class="t" style="left:1337.6px;top:363.2px;font-size:13px;color:#1c2124;letter-spacing:-0.25px">1</div>
<div class="t" style="left:1399.6px;top:363.2px;font-size:13px;color:#1c2124;transform:scaleX(0.947)">1.15</div>
<div class="t" style="left:1508.4px;top:363.2px;font-size:13px;color:#1c2124;transform:scaleX(0.948)">F340BFNRV15A</div>
<div class="t" style="left:1652.7px;top:363.2px;font-size:13px;color:#1c2124;letter-spacing:0.20px">14</div>
<div class="t" style="left:1738.7px;top:363.2px;font-size:13px;color:#1c2124;letter-spacing:0.06px">ROX/AA/17</div>
<div class="t" style="left:104.6px;top:391.2px;font-size:13px;color:#1c2124;transform:scaleX(0.965)">SAT701-1</div>
<div class="t" style="left:323.1px;top:391.2px;font-size:13px;color:#1c2124;transform:scaleX(0.893)">E08</div>
<div class="t" style="left:405.5px;top:391.2px;font-size:13px;color:#1c2124;transform:scaleX(0.932)">AIRGARD CHAMBER A</div>
<div class="t" style="left:655.4px;top:391.2px;font-size:13px;color:#1c2124;transform:scaleX(1.098)">DI</div>
<div class="t" style="left:761.1px;top:391.2px;font-size:13px;color:#1c2124;transform:scaleX(0.950)">1313E</div>
<div class="t" style="left:842.5px;top:391.2px;font-size:13px;color:#1c2124;transform:scaleX(0.962)">F34</div>
<div class="t" style="left:925.6px;top:391.2px;font-size:13px;color:#1c2124;transform:scaleX(0.935)">NPS</div>
<div class="t" style="left:1012.5px;top:391.2px;font-size:13px;color:#1c2124;letter-spacing:-0.62px">B</div>
<div class="t" style="left:1082.2px;top:391.2px;font-size:13px;color:#1c2124;letter-spacing:0.22px">North Fab</div>
<div class="t" style="left:1185.8px;top:391.2px;font-size:13px;color:#1c2124;letter-spacing:-0.12px">0.208</div>
<div class="t" style="left:1261.6px;top:391.2px;font-size:13px;color:#1c2124">10</div>
<div class="t" style="left:1337.8px;top:391.2px;font-size:13px;color:#1c2124;letter-spacing:-0.25px">2</div>
<div class="t" style="left:1399.8px;top:391.2px;font-size:13px;color:#1c2124;transform:scaleX(0.971)">2.08</div>
<div class="t" style="left:1508.4px;top:391.2px;font-size:13px;color:#1c2124;transform:scaleX(0.938)">F340BSNRAC17B</div>
<div class="t" style="left:1652.7px;top:391.2px;font-size:13px;color:#1c2124;letter-spacing:-0.15px">14,16</div>
<div class="t" style="left:1738.7px;top:391.2px;font-size:13px;color:#1c2124;letter-spacing:0.06px">ROX/AA/17</div>
<div class="t" style="left:104.6px;top:419.2px;font-size:13px;color:#1c2124;transform:scaleX(0.965)">SAT701-1</div>
<div class="t" style="left:323.1px;top:419.2px;font-size:13px;color:#1c2124;transform:scaleX(0.893)">E09</div>
<div class="t" style="left:405.5px;top:419.2px;font-size:13px;color:#1c2124;transform:scaleX(0.930)">AIRGARD CHAMBER B</div>
<div class="t" style="left:655.4px;top:419.2px;font-size:13px;color:#1c2124;transform:scaleX(1.098)">DI</div>
<div class="t" style="left:761.1px;top:419.2px;font-size:13px;color:#1c2124;transform:scaleX(0.950)">1313E</div>
<div class="t" style="left:842.5px;top:419.2px;font-size:13px;color:#1c2124;transform:scaleX(0.962)">F34</div>
<div class="t" style="left:925.6px;top:419.2px;font-size:13px;color:#1c2124;transform:scaleX(0.935)">NPS</div>
<div class="t" style="left:1012.5px;top:419.2px;font-size:13px;color:#1c2124;letter-spacing:-0.62px">B</div>
<div class="t" style="left:1082.2px;top:419.2px;font-size:13px;color:#1c2124;letter-spacing:0.22px">North Fab</div>
<div class="t" style="left:1185.8px;top:419.2px;font-size:13px;color:#1c2124;letter-spacing:-0.12px">0.208</div>
<div class="t" style="left:1261.6px;top:419.2px;font-size:13px;color:#1c2124">10</div>
<div class="t" style="left:1337.8px;top:419.2px;font-size:13px;color:#1c2124;letter-spacing:-0.25px">2</div>
<div class="t" style="left:1399.8px;top:419.2px;font-size:13px;color:#1c2124;transform:scaleX(0.971)">2.08</div>
<div class="t" style="left:1508.4px;top:419.2px;font-size:13px;color:#1c2124;transform:scaleX(0.938)">F340BSNRAC17B</div>
<div class="t" style="left:1653.0px;top:419.2px;font-size:13px;color:#1c2124;letter-spacing:-0.12px">7,9</div>
<div class="t" style="left:1738.7px;top:419.2px;font-size:13px;color:#1c2124;letter-spacing:0.06px">ROX/AA/17</div>
<div class="t" style="left:104.6px;top:447.2px;font-size:13px;color:#1c2124;transform:scaleX(0.965)">SAT701-1</div>
<div class="t" style="left:323.1px;top:447.2px;font-size:13px;color:#1c2124;transform:scaleX(0.893)">E10</div>
<div class="t" style="left:404.8px;top:447.2px;font-size:13px;color:#1c2124;transform:scaleX(0.957)">CHEMGUARD TMA XX RECEPTACLE</div>
<div class="t" style="left:655.4px;top:447.2px;font-size:13px;color:#1c2124;transform:scaleX(1.098)">DI</div>
<div class="t" style="left:761.1px;top:447.2px;font-size:13px;color:#1c2124;transform:scaleX(0.950)">1313E</div>
<div class="t" style="left:842.5px;top:447.2px;font-size:13px;color:#1c2124;transform:scaleX(0.962)">F34</div>
<div class="t" style="left:925.6px;top:447.2px;font-size:13px;color:#1c2124;transform:scaleX(0.935)">NPS</div>
<div class="t" style="left:1012.5px;top:447.2px;font-size:13px;color:#1c2124;letter-spacing:-0.62px">B</div>
<div class="t" style="left:1082.2px;top:447.2px;font-size:13px;color:#1c2124;letter-spacing:0.22px">North Fab</div>
<div class="t" style="left:1185.8px;top:447.2px;font-size:13px;color:#1c2124;transform:scaleX(0.969)">0.23</div>
<div class="t" style="left:1262.1px;top:447.2px;font-size:13px;color:#1c2124;letter-spacing:-0.25px">3</div>
<div class="t" style="left:1337.6px;top:447.2px;font-size:13px;color:#1c2124;letter-spacing:-0.25px">1</div>
<div class="t" style="left:1400.0px;top:447.2px;font-size:13px;color:#1c2124;transform:scaleX(0.961)">0.69</div>
<div class="t" style="left:1508.4px;top:447.2px;font-size:13px;color:#1c2124;transform:scaleX(0.948)">F340BFNRV15A</div>
<div class="t" style="left:1652.7px;top:447.2px;font-size:13px;color:#1c2124">18</div>
<div class="t" style="left:1738.7px;top:447.2px;font-size:13px;color:#1c2124;letter-spacing:0.06px">ROX/AA/17</div>
<div class="t" style="left:104.6px;top:475.2px;font-size:13px;color:#1c2124;transform:scaleX(0.965)">SAT701-1</div>
<div class="t" style="left:323.1px;top:475.2px;font-size:13px;color:#1c2124;transform:scaleX(0.937)">E11</div>
<div class="t" style="left:404.8px;top:475.2px;font-size:13px;color:#1c2124;transform:scaleX(0.950)">CHEMGUARD PUMP</div>
<div class="t" style="left:655.4px;top:475.2px;font-size:13px;color:#1c2124;transform:scaleX(1.098)">DI</div>
<div class="t" style="left:761.1px;top:475.2px;font-size:13px;color:#1c2124;transform:scaleX(0.950)">1313E</div>
<div class="t" style="left:842.5px;top:475.2px;font-size:13px;color:#1c2124;transform:scaleX(0.962)">F34</div>
<div class="t" style="left:925.6px;top:475.2px;font-size:13px;color:#1c2124;transform:scaleX(0.935)">NPS</div>
<div class="t" style="left:1012.5px;top:475.2px;font-size:13px;color:#1c2124;letter-spacing:-0.62px">B</div>
<div class="t" style="left:1082.2px;top:475.2px;font-size:13px;color:#1c2124;letter-spacing:0.22px">North Fab</div>
<div class="t" style="left:1185.8px;top:475.2px;font-size:13px;color:#1c2124;letter-spacing:-0.12px">0.208</div>
<div class="t" style="left:1262.1px;top:475.2px;font-size:13px;color:#1c2124;letter-spacing:-0.17px">9.1</div>
<div class="t" style="left:1338.1px;top:475.2px;font-size:13px;color:#1c2124;letter-spacing:-0.25px">3</div>
<div class="t" style="left:1400.0px;top:475.2px;font-size:13px;color:#1c2124;transform:scaleX(0.961)">3.28</div>
<div class="t" style="left:1508.4px;top:475.2px;font-size:13px;color:#1c2124;transform:scaleX(0.938)">F340BSNRAC17B</div>
<div class="t" style="left:1653.2px;top:475.2px;font-size:13px;color:#1c2124;letter-spacing:0.29px">8,10,12</div>
<div class="t" style="left:1738.7px;top:475.2px;font-size:13px;color:#1c2124;letter-spacing:0.06px">ROX/AA/17</div>
<div class="t" style="left:104.6px;top:503.2px;font-size:13px;color:#1c2124;transform:scaleX(0.965)">SAT701-1</div>
<div class="t" style="left:323.1px;top:503.2px;font-size:13px;color:#1c2124;transform:scaleX(0.893)">E12</div>
<div class="t" style="left:405.3px;top:503.2px;font-size:13px;color:#1c2124;transform:scaleX(0.927)">VESDA DISCONNECT SWITCH</div>
<div class="t" style="left:655.4px;top:503.2px;font-size:13px;color:#1c2124;transform:scaleX(1.098)">DI</div>
<div class="t" style="left:761.1px;top:503.2px;font-size:13px;color:#1c2124;transform:scaleX(0.950)">1313E</div>
<div class="t" style="left:842.5px;top:503.2px;font-size:13px;color:#1c2124;transform:scaleX(0.962)">F34</div>
<div class="t" style="left:925.6px;top:503.2px;font-size:13px;color:#1c2124;transform:scaleX(0.935)">NPS</div>
<div class="t" style="left:1012.5px;top:503.2px;font-size:13px;color:#1c2124;letter-spacing:-0.62px">B</div>
<div class="t" style="left:1082.2px;top:503.2px;font-size:13px;color:#1c2124;letter-spacing:0.22px">North Fab</div>
<div class="t" style="left:1185.8px;top:503.2px;font-size:13px;color:#1c2124;transform:scaleX(0.969)">0.23</div>
<div class="t" style="left:1261.8px;top:503.2px;font-size:13px;color:#1c2124;letter-spacing:-0.25px">2</div>
<div class="t" style="left:1337.6px;top:503.2px;font-size:13px;color:#1c2124;letter-spacing:-0.25px">1</div>
<div class="t" style="left:1400.0px;top:503.2px;font-size:13px;color:#1c2124;transform:scaleX(0.961)">0.46</div>
<div class="t" style="left:1508.4px;top:503.2px;font-size:13px;color:#1c2124;transform:scaleX(0.947)">F340BFCRY17B</div>
<div class="t" style="left:1653.2px;top:503.2px;font-size:13px;color:#1c2124;letter-spacing:-0.25px">8</div>
<div class="t" style="left:1738.7px;top:503.2px;font-size:13px;color:#1c2124;letter-spacing:0.06px">ROX/AA/17</div>
<div class="t" style="left:104.6px;top:531.2px;font-size:13px;color:#1c2124;transform:scaleX(0.965)">SAT701-1</div>
<div class="t" style="left:323.1px;top:531.2px;font-size:13px;color:#1c2124;transform:scaleX(0.883)">E14</div>
<div class="t" style="left:405.3px;top:531.2px;font-size:13px;color:#1c2124;transform:scaleX(0.927)">VESDA DISCONNECT SWITCH</div>
<div class="t" style="left:655.4px;top:531.2px;font-size:13px;color:#1c2124;transform:scaleX(1.098)">DI</div>
<div class="t" style="left:761.1px;top:531.2px;font-size:13px;color:#1c2124;transform:scaleX(0.950)">1313E</div>
<div class="t" style="left:842.5px;top:531.2px;font-size:13px;color:#1c2124;transform:scaleX(0.962)">F34</div>
<div class="t" style="left:925.6px;top:531.2px;font-size:13px;color:#1c2124;transform:scaleX(0.935)">NPS</div>
<div class="t" style="left:1012.5px;top:531.2px;font-size:13px;color:#1c2124;letter-spacing:-0.62px">B</div>
<div class="t" style="left:1082.2px;top:531.2px;font-size:13px;color:#1c2124;letter-spacing:0.22px">North Fab</div>
<div class="t" style="left:1185.8px;top:531.2px;font-size:13px;color:#1c2124;transform:scaleX(0.969)">0.23</div>
<div class="t" style="left:1261.8px;top:531.2px;font-size:13px;color:#1c2124;letter-spacing:-0.25px">2</div>
<div class="t" style="left:1337.6px;top:531.2px;font-size:13px;color:#1c2124;letter-spacing:-0.25px">1</div>
<div class="t" style="left:1400.0px;top:531.2px;font-size:13px;color:#1c2124;transform:scaleX(0.961)">0.46</div>
<div class="t" style="left:1508.4px;top:531.2px;font-size:13px;color:#1c2124;transform:scaleX(0.947)">F340BFCRY17B</div>
<div class="t" style="left:1652.7px;top:531.2px;font-size:13px;color:#1c2124">10</div>
<div class="t" style="left:1738.7px;top:531.2px;font-size:13px;color:#1c2124;letter-spacing:0.06px">ROX/AA/17</div>
<div class="a" style="left:24.7px;top:16.9px;width:5px;height:4.8px;background:#00b2e8"></div>
</div>
<div id="ov"></div>
<div id="top">
<div class="a" style="left:555px;top:344px;width:750px;height:273px;background:#fff;border-radius:3.5px;box-shadow:0 3px 4px -1px rgba(0,0,0,.6),0 2px 2px rgba(0,0,0,.25)"></div>
<div class="a" style="left:556px;top:407px;width:748px;height:1px;background:#e5e5e5"></div>
<div class="a" style="left:649px;top:491px;width:150px;height:32px;background:#f4f4f4;border:1px solid #d4d4d4;border-radius:4px"></div>
<svg style="left:780px;top:503.5px" width="10" height="7.5" viewBox="0 0 10 7.5"><path d="M0 0H10L5.0 7.5Z" fill="#333"/></svg>
<div class="a" style="left:1037px;top:491px;width:150px;height:32px;background:#f4f4f4;border:1px solid #d0d0d0;border-radius:4px;box-shadow:0 0 0 2px #e9e9e9"></div>
<svg style="left:1168px;top:503.5px" width="10" height="7.5" viewBox="0 0 10 7.5"><path d="M0 0H10L5.0 7.5Z" fill="#333"/></svg>
<div class="a" style="left:569px;top:540px;width:721px;height:1px;background:#e2e2e2"></div>
<div class="a" style="left:582px;top:554px;width:340px;height:31.5px;background:linear-gradient(#e4e7ec,#dfe2e8);border-radius:3px"></div>
<div class="a" style="left:938px;top:554.5px;width:338px;height:30.5px;background:#00aeef;border-radius:2px"></div>
<svg style="left:0;top:0" width="1862" height="646" viewBox="0 0 1862 646" fill="none"><g stroke="#fff" stroke-width="1.200" stroke-linejoin="round" fill="none"><path d="M1078.300 571.700H1074V566L1076.600 563.400H1082.100V566.200"/><path d="M1074 566H1076.600V563.400"/><path d="M1078.800 568.800L1081.400 566.300H1086.400V575.400H1078.800Z"/><path d="M1078.800 568.800H1081.400V566.300"/></g></svg>
<div class="t" style="left:569.4px;top:368.9px;font-size:17px;color:#222;transform:scaleX(1.084)">Transfer POCs from one tool to another tool</div>
<div class="t" style="left:1275.0px;top:364.9px;font-size:22px;color:#7d7d7d;font-weight:bold">×</div>
<div class="t" style="left:589.0px;top:421.8px;font-size:13px;color:#333;letter-spacing:0.27px">This process will move all electrical and telecoms POCs from the source tool to the destination tool along with</div>
<div class="t" style="left:588.8px;top:438.7px;font-size:13px;color:#333;letter-spacing:0.21px">assignments to circuits on Panels/CPs and assignments to Popouts/Roxtecs. If the destination tool has existing</div>
<div class="t" style="left:588.3px;top:455.6px;font-size:13px;color:#333;letter-spacing:0.21px">POCs with the same reference number as the source tool, then those POCs will be overwritten.</div>
<div class="t" style="left:568.6px;top:500.1px;font-size:13px;color:#333;letter-spacing:0.30px">Source Tool:</div>
<div class="t" style="left:657.8px;top:501.0px;font-size:13px;color:#444;letter-spacing:0.28px">SAT701 - 1</div>
<div class="t" style="left:929.0px;top:500.1px;font-size:13px;color:#333;transform:scaleX(1.077)">Destination Tool:</div>
<div class="t" style="left:1045.8px;top:501.0px;font-size:13px;color:#444;letter-spacing:0.22px">SAT702 - 1</div>
<div class="t" style="left:731.9px;top:563.0px;font-size:13px;color:#333;letter-spacing:0.13px">Cancel</div>
<div class="t" style="left:1091.2px;top:563.0px;font-size:13px;color:#fff;font-weight:bold;transform:scaleX(0.952)">Transfer</div>
</div>
</body></html>
